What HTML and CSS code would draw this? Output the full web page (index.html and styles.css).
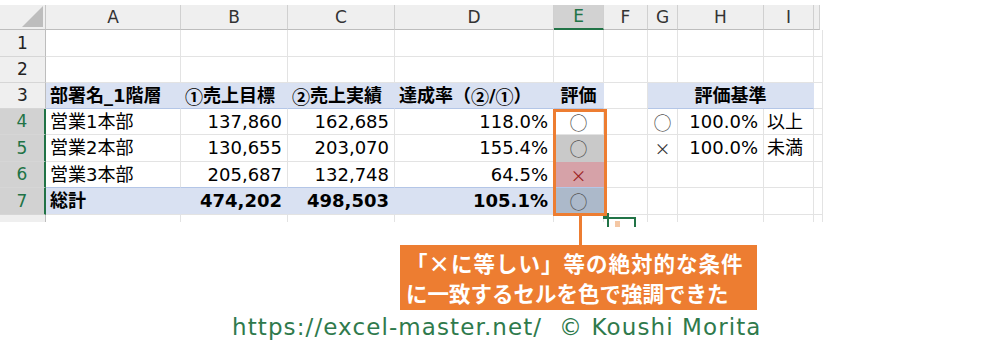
FILE: index.html
```html
<!DOCTYPE html>
<html lang="ja">
<head>
<meta charset="utf-8">
<title>条件付き書式</title>
<link rel="stylesheet" href="styles.css">
</head>
<body>
<div class="page">
  <div class="sheet-wrap">
    <div class="sheet">
      <!-- column headers -->
      <div class="c corner"><svg class="tri" width="21" height="21" viewBox="0 0 21 21"><polygon points="21,0 21,21 0,21" fill="#bdbdbd"/></svg></div>
      <div class="c ch">A</div>
      <div class="c ch">B</div>
      <div class="c ch">C</div>
      <div class="c ch">D</div>
      <div class="c ch sel">E</div>
      <div class="c ch">F</div>
      <div class="c ch">G</div>
      <div class="c ch">H</div>
      <div class="c ch">I</div>
      <div class="c ch edge"></div>

      <!-- row 1 -->
      <div class="c rh">1</div>
      <div class="c"></div><div class="c"></div><div class="c"></div><div class="c"></div><div class="c"></div><div class="c"></div><div class="c"></div><div class="c"></div><div class="c"></div><div class="c"></div>

      <!-- row 2 -->
      <div class="c rh">2</div>
      <div class="c"></div><div class="c"></div><div class="c"></div><div class="c"></div><div class="c"></div><div class="c"></div><div class="c"></div><div class="c"></div><div class="c"></div><div class="c"></div>

      <!-- row 3 -->
      <div class="c rh">3</div>
      <div class="c hd b">部署名_1階層</div>
      <div class="c hd b"><span class="jp">①</span>売上目標</div>
      <div class="c hd b"><span class="jp">②</span>売上実績</div>
      <div class="c hd b">達成率（<span class="jp">②</span>/<span class="jp">①</span>）</div>
      <div class="c hd b ctr">評価</div>
      <div class="c"></div>
      <div class="c hd b ctr span3">評価基準</div>
      <div class="c"></div>

      <!-- row 4 -->
      <div class="c rh sel">4</div>
      <div class="c">営業1本部</div>
      <div class="c r">137,860</div>
      <div class="c r">162,685</div>
      <div class="c r">118.0%</div>
      <div class="c ctr ev-ok"><span class="jp mark">○</span></div>
      <div class="c"></div>
      <div class="c ctr"><span class="jp mark">○</span></div>
      <div class="c r">100.0%</div>
      <div class="c il">以上</div>
      <div class="c"></div>

      <!-- row 5 -->
      <div class="c rh sel">5</div>
      <div class="c">営業2本部</div>
      <div class="c r">130,655</div>
      <div class="c r">203,070</div>
      <div class="c r">155.4%</div>
      <div class="c ctr ev-gray"><span class="jp mark">○</span></div>
      <div class="c"></div>
      <div class="c ctr"><span class="jp cross">×</span></div>
      <div class="c r">100.0%</div>
      <div class="c il">未満</div>
      <div class="c"></div>

      <!-- row 6 -->
      <div class="c rh sel">6</div>
      <div class="c">営業3本部</div>
      <div class="c r">205,687</div>
      <div class="c r">132,748</div>
      <div class="c r">64.5%</div>
      <div class="c ctr ev-ng"><span class="jp cross red">×</span></div>
      <div class="c"></div>
      <div class="c"></div>
      <div class="c"></div>
      <div class="c"></div>
      <div class="c"></div>

      <!-- row 7 -->
      <div class="c rh sel">7</div>
      <div class="c tot b">総計</div>
      <div class="c tot b r">474,202</div>
      <div class="c tot b r">498,503</div>
      <div class="c tot b r">105.1%</div>
      <div class="c tot ctr ev-tot"><span class="jp mark">○</span></div>
      <div class="c"></div>
      <div class="c"></div>
      <div class="c"></div>
      <div class="c"></div>
      <div class="c"></div>

      <!-- row 8 (partial) -->
      <div class="c rh part"></div>
      <div class="c part"></div><div class="c part"></div><div class="c part"></div><div class="c part"></div><div class="c part"></div><div class="c part"></div><div class="c part"></div><div class="c part"></div><div class="c part"></div><div class="c part"></div>
    </div>

    <div class="fill-handle"></div>
    <div class="hl-box"></div>
    <div class="connector"></div>
    <div class="qa"><span class="qa-dot"></span></div>
  </div>

  <div class="callout">
    <p>「×に等しい」等の絶対的な条件</p>
    <p>に一致するセルを色で強調できた</p>
  </div>

  <div class="footer">https://excel-master.net/  © Koushi Morita</div>
</div>
</body>
</html>
```

FILE: styles.css
```css
* {
  box-sizing: border-box;
}

html, body {
  margin: 0;
  padding: 0;
  background: #ffffff;
}

body {
  font-family: "DejaVu Sans", "Noto Sans CJK JP", sans-serif;
  color: #000;
}

.page {
  width: 1000px;
  height: 352px;
  padding-top: 5px;
  overflow: hidden;
}

.sheet-wrap {
  position: relative;
  width: 820px;
}

.sheet {
  display: grid;
  grid-template-columns: 46px 135px 107px 107px 159px 50px 44px 30px 86px 50px 6px;
  grid-template-rows: 25px 27px 26px 26px 26px 27px 26px 27px 7px;
  width: 820px;
}

.c {
  display: flex;
  align-items: center;
  padding: 0 4px;
  border-right: 1px solid #e3e3e3;
  border-bottom: 1px solid #e3e3e3;
  font-size: 18px;
  line-height: 1;
  white-space: nowrap;
  overflow: hidden;
  background: #fff;
}

.c.part {
  border-bottom: none;
}

.corner {
  background: #efefef;
  border-right-color: #c6c6c6;
  border-bottom-color: #bdbdbd;
  justify-content: flex-end;
  align-items: flex-end;
  padding: 0 2px 2px 0;
}

.tri {
  display: block;
}

.ch {
  background: #efefef;
  justify-content: center;
  font-size: 17px;
  color: #333;
  border-right-color: #d0d0d0;
  border-bottom-color: #bdbdbd;
}

.ch.sel {
  background: #d2d2d2;
  color: #217346;
  border-bottom: 2px solid #217346;
}

.ch.edge {
  padding: 0;
}

.rh {
  background: #efefef;
  justify-content: center;
  font-size: 17px;
  color: #222;
  border-right-color: #bdbdbd;
  border-bottom-color: #d6d6d6;
}

.rh.sel {
  background: #d2d2d2;
  color: #217346;
  border-right: 2px solid #217346;
}

.rh.part {
  border-bottom: none;
}

.b {
  font-weight: 700;
}

.r {
  justify-content: flex-end;
  padding-right: 5px;
}

.ctr {
  justify-content: center;
}

.il {
  padding-left: 3px;
}

.jp {
  font-family: "Noto Sans CJK JP", sans-serif;
}

.hd {
  background: #d9e1f2;
  border-right-color: #d9e1f2;
  border-bottom-color: #b4c6e7;
}

.span3 {
  grid-column: span 3;
}

.tot {
  background: #d9e1f2;
  border-right-color: #d9e1f2;
  border-top: 1px solid #b4c6e7;
  margin-top: -1px;
}

.mark {
  font-size: 18px;
  font-weight: 400;
  color: #555;
}

.cross {
  font-size: 16px;
  color: #333;
}

.cross.red {
  color: #9c1f1f;
}

.ev-ok {
  background: #ffffff;
}

.ev-gray {
  background: #c9c9c9;
  border-right-color: #c9c9c9;
  border-bottom-color: #c9c9c9;
}

.ev-ng {
  background: #d6a2a8;
  border-right-color: #d6a2a8;
  border-bottom-color: #d6a2a8;
}

.ev-tot {
  background: #acb9ca;
  border-right-color: #acb9ca;
}

/* annotation overlays */
.fill-handle {
  position: absolute;
  left: 603px;
  top: 208px;
  width: 6px;
  height: 6px;
  background: #217346;
}

.hl-box {
  position: absolute;
  left: 553px;
  top: 104px;
  width: 54px;
  height: 107px;
  border: 3px solid #ed7d31;
}

.connector {
  position: absolute;
  left: 579px;
  top: 211px;
  width: 3px;
  height: 29px;
  background: #ed7d31;
}

.qa {
  position: absolute;
  left: 607px;
  top: 212px;
  width: 29px;
  height: 10px;
  border: 2px solid #217346;
  border-bottom: none;
  background: #fff;
}

.qa-dot {
  position: absolute;
  left: 6px;
  top: 2px;
  width: 5px;
  height: 6px;
  background: #f4c7a4;
}

.callout {
  margin: 23px 0 0 400px;
  width: 357px;
  height: 65px;
  padding: 3px 0 0 6px;
  background: #ed7d31;
  color: #fff;
  font-family: "Noto Sans CJK JP", sans-serif;
  font-weight: 700;
  font-size: 21.5px;
  line-height: 30px;
}

.callout p {
  margin: 0;
  white-space: nowrap;
}

.callout p:first-child {
  letter-spacing: 1px;
}

.footer {
  margin-top: 3px;
  padding-left: 232px;
  font-family: "DejaVu Sans", sans-serif;
  font-size: 23px;
  line-height: 28px;
  letter-spacing: 1.1px;
  color: #2f7a4c;
  white-space: pre;
}
```
